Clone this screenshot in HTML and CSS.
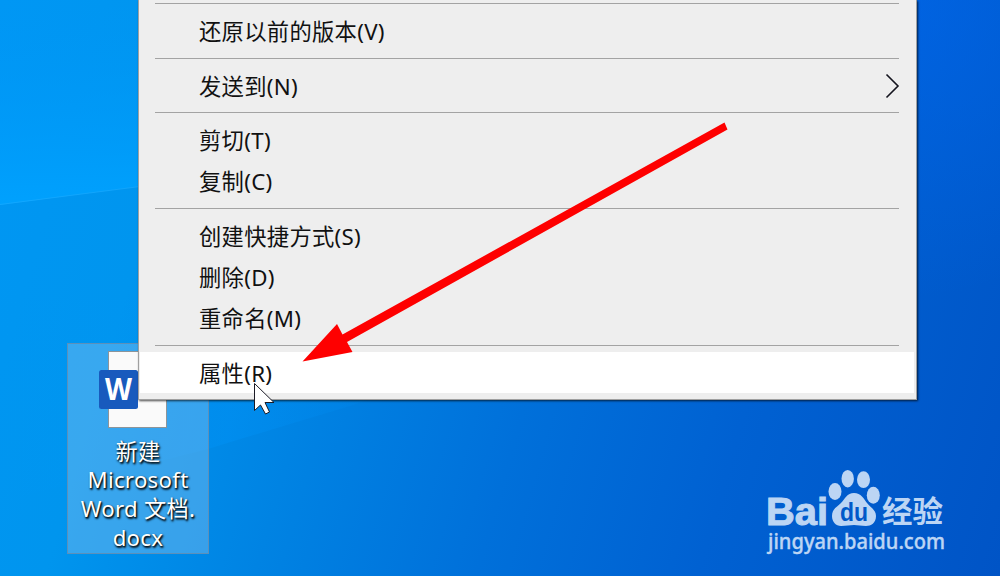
FILE: index.html
```html
<!DOCTYPE html>
<html lang="zh-CN">
<head>
  <meta charset="UTF-8" />
  <meta name="viewport" content="width=device-width, initial-scale=1" />
  <title>桌面</title>
  <link rel="stylesheet" href="styles.css">
</head>
<body>
  <main class="desktop">
    <svg class="wallpaper" viewBox="0 0 1000 576" aria-hidden="true">
      <defs>
        <linearGradient id="beamTop" x1="0" y1="0" x2="0" y2="1">
          <stop offset="0" stop-color="#0096f8" stop-opacity="0" />
          <stop offset="1" stop-color="#00a2ff" stop-opacity=".9" />
        </linearGradient>
        <linearGradient id="beamLow" gradientUnits="userSpaceOnUse" x1="0" y1="0" x2="380" y2="0">
          <stop offset="0" stop-color="#0098f8" stop-opacity="0" />
          <stop offset=".6" stop-color="#0094fa" stop-opacity=".35" />
          <stop offset="1" stop-color="#0090f8" stop-opacity=".1" />
        </linearGradient>
        <radialGradient id="glowRight" gradientUnits="userSpaceOnUse" cx="900" cy="0" r="300">
          <stop offset="0" stop-color="#0068f4" stop-opacity=".5" />
          <stop offset="1" stop-color="#0068f4" stop-opacity="0" />
        </radialGradient>
      </defs>
      <path d="M0 0H300V165L0 205Z" fill="url(#beamTop)" />
      <path d="M0 204.500L140 186.500" stroke="#1eacff" stroke-opacity=".6" />
      <path d="M0 300L420 300V380L350 406Q270 430 208 449L0 502Z" fill="url(#beamLow)" />
      <rect x="600" width="400" height="300" fill="url(#glowRight)" />
    </svg>

    <div class="file">
      <svg class="file-icon" viewBox="0 0 70 78" width="70" height="78">
        <rect x="9.500" y="0.500" width="58" height="76" fill="#fafafa" stroke="#8d9499" />
        <rect x="0" y="19" width="39" height="39" rx="2.500" fill="#185abd" />
        <text class="file-letter" x="19.500" y="49" text-anchor="middle" textLength="27" lengthAdjust="spacingAndGlyphs">W</text>
      </svg>
      <div class="file-name">新建<br>Microsoft<br>Word 文档.<br>docx</div>
    </div>

    <ul class="menu">
      <li class="separator"></li>
      <li class="item">还原以前的版本(V)</li>
      <li class="separator"></li>
      <li class="item">发送到(N)
        <svg class="chevron" viewBox="0 0 15 26" width="15" height="26">
          <path d="M1.500 1.500L13 13L1.500 24.500" fill="none" stroke="#14141e" stroke-width="1.600" />
        </svg>
      </li>
      <li class="separator"></li>
      <li class="item">剪切(T)</li>
      <li class="item">复制(C)</li>
      <li class="separator"></li>
      <li class="item">创建快捷方式(S)</li>
      <li class="item">删除(D)</li>
      <li class="item">重命名(M)</li>
      <li class="separator"></li>
      <li class="item active">属性(R)</li>
    </ul>

    <svg class="overlay" viewBox="0 0 1000 576">
      <path d="M724.500 122.500L727.500 129.500L347 342L352.500 352L302.500 361.500L337 324L342.500 334.500Z" fill="#fe0000" />
      <path d="M254.500 383.500V410.500L260.500 405L265.500 414L269.500 412L265 402.500H274Z" fill="#fff" stroke="#1b1b26" />

      <g class="brand">
        <text class="brand-latin" x="766" y="524.500" textLength="62" lengthAdjust="spacingAndGlyphs">Bai</text>
        <ellipse cx="835" cy="491.500" rx="6.500" ry="8.500" />
        <ellipse cx="847.700" cy="478.700" rx="6.200" ry="8.700" />
        <ellipse cx="863.500" cy="479.700" rx="6.500" ry="8.400" />
        <ellipse cx="873.300" cy="495.300" rx="6.500" ry="8.500" />
        <path d="M854 493C861 493 864 499 867 503C871 508 876 510 876 516C876 523 871 526 866 526C861 526 858 525 854 525C850 525 846 526 841 526C836 526 832 522 832 516C832 509 837 507 841 503C845 499 847 493 854 493Z" />
        <text class="brand-du" x="840" y="520.500" textLength="28" lengthAdjust="spacingAndGlyphs">du</text>
        <text class="brand-cn" x="882" y="522" textLength="61" lengthAdjust="spacingAndGlyphs">经验</text>
        <text class="brand-url" x="768" y="549" textLength="177" lengthAdjust="spacingAndGlyphs">jingyan.baidu.com</text>
      </g>
    </svg>
  </main>
</body>
</html>
```
FILE: styles.css
```css
body {
  margin: 0;
  font-family: "Noto Sans", "Noto Sans CJK SC", sans-serif;
}
.desktop {
  position: relative;
  width: 1000px;
  height: 576px;
  overflow: hidden;
  background: linear-gradient(106deg, #0097f4 0%, #0095ee 18%, #0083e3 36%, #0070da 55%, #0061d2 74%, #0054c6 100%);
}
.wallpaper, .overlay {
  position: absolute;
  inset: 0;
  width: 1000px;
  height: 576px;
}
.overlay {
  pointer-events: none;
}
.file {
  position: absolute;
  left: 67px;
  top: 343px;
  box-sizing: border-box;
  width: 142px;
  height: 211px;
  padding-top: 7px;
  border: 1px solid #5c90ba;
  background: rgba(125, 190, 240, 0.45);
}
.file-icon {
  display: block;
  margin-left: 31px;
}
.file-letter {
  font: bold 30px "Open Sans", sans-serif;
  fill: #fff;
}
.file-name {
  margin-top: 8.5px;
  color: #fff;
  font-size: 22.2px;
  line-height: 28.7px;
  letter-spacing: 0.3px;
  text-align: center;
  white-space: nowrap;
  text-shadow: 1px 1px 2px #000, 1px 2px 2px rgba(0, 0, 0, 0.7);
}
.menu {
  position: absolute;
  left: 138px;
  top: 0;
  display: flex;
  flex-direction: column;
  justify-content: flex-end;
  box-sizing: border-box;
  width: 779px;
  height: 400px;
  margin: 0;
  padding: 0 2px 6px 1px;
  list-style: none;
  color: #111;
  background: #eee;
  border: 1px solid #a0a0a0;
  border-top: 0;
  box-shadow: 1px 1px 2px rgba(0, 0, 0, 0.7);
}
.item {
  display: flex;
  flex: none;
  align-items: center;
  justify-content: space-between;
  box-sizing: border-box;
  height: 41.2px;
  padding: 1.5px 14px 0 59px;
  font-size: 22.3px;
  line-height: 39px;
  letter-spacing: 0.3px;
}
.item.active {
  background: #fff;
}
.separator {
  flex: none;
  height: 1px;
  margin: 6.1px 15px 6.2px;
  background: #a3a3a3;
}
.brand {
  fill: #bcd5f4;
}
.brand-latin {
  font: bold 38px "Liberation Sans", sans-serif;
  stroke: #bcd5f4;
  stroke-width: 1px;
}
.brand-du {
  font: bold 25px "Liberation Sans", sans-serif;
  fill: #0059c9;
}
.brand-cn {
  font: bold 30px "Noto Sans CJK SC", sans-serif;
}
.brand-url {
  font: 500 22px "Noto Sans", sans-serif;
  stroke: #bcd5f4;
  stroke-width: 0.4px;
}
```
